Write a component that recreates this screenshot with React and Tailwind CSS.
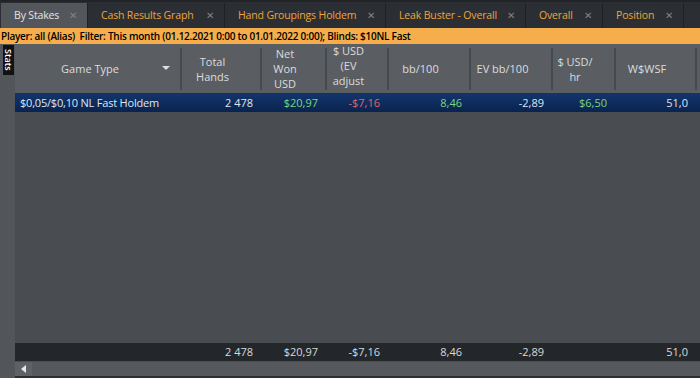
import React from "react";

const font = { fontFamily: '"Open Sans", "Noto Sans", sans-serif' };

const tabs = [
  { label: "By Stakes", w: 87, active: true },
  { label: "Cash Results Graph", w: 137 },
  { label: "Hand Groupings Holdem", w: 161 },
  { label: "Leak Buster - Overall", w: 140 },
  { label: "Overall", w: 77 },
  { label: "Position", w: 81 },
];

const cols = [
  { w: 165, head: ["Game Type"], arrow: true },
  { w: 80, head: ["Total", "Hands"] },
  { w: 65, head: ["Net", "Won", "USD"] },
  { w: 62, head: ["$ USD", "(EV", "adjust"], up: true },
  { w: 82, head: ["bb/100"] },
  { w: 82, head: ["EV bb/100"] },
  { w: 63, head: ["$ USD/", "hr"] },
  { w: 81, head: ["W$WSF"] },
];

const row = [
  { t: "$0,05/$0,10 NL Fast Holdem", left: true },
  { t: "2 478" },
  { t: "$20,97", c: "text-[#7cd67c]" },
  { t: "-$7,16", c: "text-[#e0636b]" },
  { t: "8,46", c: "text-[#7cd67c]" },
  { t: "-2,89" },
  { t: "$6,50", c: "text-[#7cd67c]" },
  { t: "51,0" },
];

const foot = ["", "2 478", "$20,97", "-$7,16", "8,46", "-2,89", "", "51,0"];

export default function App() {
  return (
    <div
      className="w-[700px] h-[378px] overflow-hidden bg-[#2b2e32] flex flex-col text-[11px]"
      style={font}
    >
      {/* tab bar */}
      <div className="h-[28px] flex items-end bg-[#2b2e32] border-t-[2px] border-[#222427] pl-[1px]">
        {tabs.map((t, i) => (
          <div
            key={i}
            style={{ width: t.w }}
            className={
              "h-[25px] flex items-center justify-between pl-[13px] pr-[10px] border-r border-[#1f2124] shrink-0 " +
              (t.active ? "bg-[#53575b] text-[#e4e4e4]" : "text-[#eea53c]")
            }
          >
            <span className="whitespace-nowrap leading-none text-[10.5px] tracking-[-0.15px]">{t.label}</span>
            <span className="text-[#808488] text-[9.5px] leading-none">✕</span>
          </div>
        ))}
      </div>
      {/* filter bar */}
      <div className="h-[16px] bg-[#f5ae4b] text-black font-semibold text-[10px] flex items-center pl-[1px] whitespace-nowrap leading-none tracking-[-0.25px]">
        Player: all (Alias)&nbsp;&nbsp;Filter: This month (01.12.2021 0:00 to 01.01.2022 0:00); Blinds: $10NL Fast
      </div>
      {/* main */}
      <div className="flex-1 flex min-h-0">
        {/* side strip */}
        <div className="w-[15px] bg-[#52565a] shrink-0 pt-[1px] pl-[3px]">
          <div className="w-[11px] h-[30px] bg-[#111213] text-white text-[9px] font-semibold flex items-center justify-center [writing-mode:vertical-rl] leading-none">
            Stats
          </div>
        </div>
        <div className="flex-1 flex flex-col bg-[#494d51] min-w-0">
          {/* header */}
          <div className="h-[50px] bg-[#5a5e62] flex border-b border-[#2c2f32] shrink-0">
            {cols.map((c, i) => (
              <div key={i} style={{ width: c.w }} className="relative shrink-0 h-full flex items-center overflow-hidden">
                {i > 0 && <div className="absolute left-0 top-[4px] bottom-[3px] w-[2px] bg-[#46494d]" />}
                <div
                  className={
                    "flex-1 flex flex-col items-center text-[#dadcde] text-[11px] leading-[15px] pr-[15px] " +
                    (c.up ? "-translate-y-[3px]" : "")
                  }
                >
                  {c.head.map((h, j) => (
                    <span key={j} className="whitespace-nowrap">{h}</span>
                  ))}
                </div>
                {c.arrow && (
                  <div className="absolute right-[10px] top-[22px] w-0 h-0 border-l-[4px] border-r-[4px] border-t-[4px] border-l-transparent border-r-transparent border-t-[#e0e0e0]" />
                )}
              </div>
            ))}
            <div className="flex-1 relative">
              <div className="absolute left-0 top-[4px] bottom-[3px] w-[2px] bg-[#46494d]" />
            </div>
          </div>
          {/* selected row */}
          <div className="h-[18px] bg-gradient-to-b from-[#12356a] to-[#0a2350] flex items-center text-[#dfe6f0] text-[11px] shrink-0">
            {row.map((c, i) => (
              <div
                key={i}
                style={{ width: cols[i].w }}
                className={
                  "shrink-0 whitespace-nowrap " +
                  (c.left ? "pl-[5px] text-left tracking-[-0.2px] " : "pr-[7px] text-right ") +
                  (c.c || "")
                }
              >
                {c.t}
              </div>
            ))}
          </div>
          <div className="flex-1" />
          {/* footer */}
          <div className="h-[18px] bg-[#24272a] flex items-center text-[#d8dadc] text-[11px] shrink-0">
            {foot.map((t, i) => (
              <div key={i} style={{ width: cols[i].w }} className="shrink-0 pr-[7px] text-right whitespace-nowrap">
                {t}
              </div>
            ))}
          </div>
          {/* scrollbar */}
          <div className="h-[15px] bg-[#55595d] border-t border-[#4a4e52] flex shrink-0">
            <div className="w-[17px] h-full bg-[#5e6266] flex items-center justify-center">
              <div className="w-0 h-0 border-t-[4px] border-b-[4px] border-r-[5px] border-t-transparent border-b-transparent border-r-[#e8e8e8]" />
            </div>
          </div>
          <div className="h-[2px] bg-[#2b2e32] shrink-0" />
        </div>
      </div>
    </div>
  );
}
